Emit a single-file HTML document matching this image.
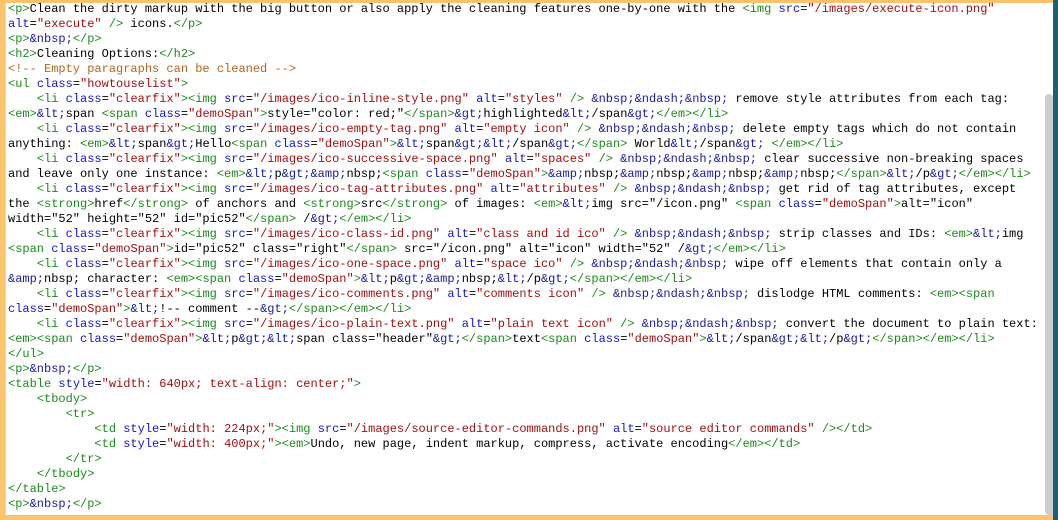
<!DOCTYPE html>
<html><head><meta charset="utf-8"><style>
html,body{margin:0;padding:0;width:1058px;height:520px;overflow:hidden;background:#fbc36c;}
#ed{position:absolute;left:5px;top:3px;width:1048px;height:512px;background:#fff;border-left:1px solid #e8d8b8;box-sizing:border-box;}
#teal{position:absolute;left:1053px;top:0;width:5px;height:520px;background:#1f5f73;}
#thumb{position:absolute;left:1045px;top:94px;width:8px;height:421px;background:#cdcdcd;border-radius:4px 4px 0 4px;}
pre{position:absolute;left:8px;top:2px;margin:0;font-family:"Liberation Mono","DejaVu Sans Mono",monospace;font-size:12px;line-height:15px;color:#000;white-space:pre;}
.g{color:#1c8a1c}.b{color:#1515c8}.r{color:#a01010}.n{color:#1a1aa0}.c{color:#b5651d}
</style></head><body>
<div id="ed"></div><div id="teal"></div><div id="thumb"></div>
<pre><span class="g">&lt;p&gt;</span>Clean the dirty markup with the big button or also apply the cleaning features one-by-one with the <span class="g">&lt;img </span><span class="b">src</span>=<span class="r">"/images/execute-icon.png"</span>
<span class="b">alt</span>=<span class="r">"execute"</span> <span class="g">/&gt;</span> icons.<span class="g">&lt;/p&gt;</span>
<span class="g">&lt;p&gt;</span><span class="n">&amp;nbsp;</span><span class="g">&lt;/p&gt;</span>
<span class="g">&lt;h2&gt;</span>Cleaning Options:<span class="g">&lt;/h2&gt;</span>
<span class="c">&lt;!-- Empty paragraphs can be cleaned --&gt;</span>
<span class="g">&lt;ul </span><span class="b">class</span>=<span class="r">"howtouselist"</span><span class="g">&gt;</span>
    <span class="g">&lt;li </span><span class="b">class</span>=<span class="r">"clearfix"</span><span class="g">&gt;&lt;img </span><span class="b">src</span>=<span class="r">"/images/ico-inline-style.png"</span> <span class="b">alt</span>=<span class="r">"styles"</span> <span class="g">/&gt;</span> <span class="n">&amp;nbsp;&amp;ndash;&amp;nbsp;</span> remove style attributes from each tag:
<span class="g">&lt;em&gt;</span><span class="n">&amp;lt;</span>span <span class="g">&lt;span </span><span class="b">class</span>=<span class="r">"demoSpan"</span><span class="g">&gt;</span>style="color: red;"<span class="g">&lt;/span&gt;</span><span class="n">&amp;gt;</span>highlighted<span class="n">&amp;lt;</span>/span<span class="n">&amp;gt;</span><span class="g">&lt;/em&gt;&lt;/li&gt;</span>
    <span class="g">&lt;li </span><span class="b">class</span>=<span class="r">"clearfix"</span><span class="g">&gt;&lt;img </span><span class="b">src</span>=<span class="r">"/images/ico-empty-tag.png"</span> <span class="b">alt</span>=<span class="r">"empty icon"</span> <span class="g">/&gt;</span> <span class="n">&amp;nbsp;&amp;ndash;&amp;nbsp;</span> delete empty tags which do not contain
anything: <span class="g">&lt;em&gt;</span><span class="n">&amp;lt;</span>span<span class="n">&amp;gt;</span>Hello<span class="g">&lt;span </span><span class="b">class</span>=<span class="r">"demoSpan"</span><span class="g">&gt;</span><span class="n">&amp;lt;</span>span<span class="n">&amp;gt;&amp;lt;</span>/span<span class="n">&amp;gt;</span><span class="g">&lt;/span&gt;</span> World<span class="n">&amp;lt;</span>/span<span class="n">&amp;gt;</span> <span class="g">&lt;/em&gt;&lt;/li&gt;</span>
    <span class="g">&lt;li </span><span class="b">class</span>=<span class="r">"clearfix"</span><span class="g">&gt;&lt;img </span><span class="b">src</span>=<span class="r">"/images/ico-successive-space.png"</span> <span class="b">alt</span>=<span class="r">"spaces"</span> <span class="g">/&gt;</span> <span class="n">&amp;nbsp;&amp;ndash;&amp;nbsp;</span> clear successive non-breaking spaces
and leave only one instance: <span class="g">&lt;em&gt;</span><span class="n">&amp;lt;</span>p<span class="n">&amp;gt;&amp;amp;</span>nbsp;<span class="g">&lt;span </span><span class="b">class</span>=<span class="r">"demoSpan"</span><span class="g">&gt;</span><span class="n">&amp;amp;</span>nbsp;<span class="n">&amp;amp;</span>nbsp;<span class="n">&amp;amp;</span>nbsp;<span class="n">&amp;amp;</span>nbsp;<span class="g">&lt;/span&gt;</span><span class="n">&amp;lt;</span>/p<span class="n">&amp;gt;</span><span class="g">&lt;/em&gt;&lt;/li&gt;</span>
    <span class="g">&lt;li </span><span class="b">class</span>=<span class="r">"clearfix"</span><span class="g">&gt;&lt;img </span><span class="b">src</span>=<span class="r">"/images/ico-tag-attributes.png"</span> <span class="b">alt</span>=<span class="r">"attributes"</span> <span class="g">/&gt;</span> <span class="n">&amp;nbsp;&amp;ndash;&amp;nbsp;</span> get rid of tag attributes, except
the <span class="g">&lt;strong&gt;</span>href<span class="g">&lt;/strong&gt;</span> of anchors and <span class="g">&lt;strong&gt;</span>src<span class="g">&lt;/strong&gt;</span> of images: <span class="g">&lt;em&gt;</span><span class="n">&amp;lt;</span>img src="/icon.png" <span class="g">&lt;span </span><span class="b">class</span>=<span class="r">"demoSpan"</span><span class="g">&gt;</span>alt="icon"
width="52" height="52" id="pic52"<span class="g">&lt;/span&gt;</span> /<span class="n">&amp;gt;</span><span class="g">&lt;/em&gt;&lt;/li&gt;</span>
    <span class="g">&lt;li </span><span class="b">class</span>=<span class="r">"clearfix"</span><span class="g">&gt;&lt;img </span><span class="b">src</span>=<span class="r">"/images/ico-class-id.png"</span> <span class="b">alt</span>=<span class="r">"class and id ico"</span> <span class="g">/&gt;</span> <span class="n">&amp;nbsp;&amp;ndash;&amp;nbsp;</span> strip classes and IDs: <span class="g">&lt;em&gt;</span><span class="n">&amp;lt;</span>img
<span class="g">&lt;span </span><span class="b">class</span>=<span class="r">"demoSpan"</span><span class="g">&gt;</span>id="pic52" class="right"<span class="g">&lt;/span&gt;</span> src="/icon.png" alt="icon" width="52" /<span class="n">&amp;gt;</span><span class="g">&lt;/em&gt;&lt;/li&gt;</span>
    <span class="g">&lt;li </span><span class="b">class</span>=<span class="r">"clearfix"</span><span class="g">&gt;&lt;img </span><span class="b">src</span>=<span class="r">"/images/ico-one-space.png"</span> <span class="b">alt</span>=<span class="r">"space ico"</span> <span class="g">/&gt;</span> <span class="n">&amp;nbsp;&amp;ndash;&amp;nbsp;</span> wipe off elements that contain only a
<span class="n">&amp;amp;</span>nbsp; character: <span class="g">&lt;em&gt;&lt;span </span><span class="b">class</span>=<span class="r">"demoSpan"</span><span class="g">&gt;</span><span class="n">&amp;lt;</span>p<span class="n">&amp;gt;&amp;amp;</span>nbsp;<span class="n">&amp;lt;</span>/p<span class="n">&amp;gt;</span><span class="g">&lt;/span&gt;&lt;/em&gt;&lt;/li&gt;</span>
    <span class="g">&lt;li </span><span class="b">class</span>=<span class="r">"clearfix"</span><span class="g">&gt;&lt;img </span><span class="b">src</span>=<span class="r">"/images/ico-comments.png"</span> <span class="b">alt</span>=<span class="r">"comments icon"</span> <span class="g">/&gt;</span> <span class="n">&amp;nbsp;&amp;ndash;&amp;nbsp;</span> dislodge HTML comments: <span class="g">&lt;em&gt;&lt;span</span>
<span class="b">class</span>=<span class="r">"demoSpan"</span><span class="g">&gt;</span><span class="n">&amp;lt;</span>!-- comment --<span class="n">&amp;gt;</span><span class="g">&lt;/span&gt;&lt;/em&gt;&lt;/li&gt;</span>
    <span class="g">&lt;li </span><span class="b">class</span>=<span class="r">"clearfix"</span><span class="g">&gt;&lt;img </span><span class="b">src</span>=<span class="r">"/images/ico-plain-text.png"</span> <span class="b">alt</span>=<span class="r">"plain text icon"</span> <span class="g">/&gt;</span> <span class="n">&amp;nbsp;&amp;ndash;&amp;nbsp;</span> convert the document to plain text:
<span class="g">&lt;em&gt;&lt;span </span><span class="b">class</span>=<span class="r">"demoSpan"</span><span class="g">&gt;</span><span class="n">&amp;lt;</span>p<span class="n">&amp;gt;&amp;lt;</span>span class="header"<span class="n">&amp;gt;</span><span class="g">&lt;/span&gt;</span>text<span class="g">&lt;span </span><span class="b">class</span>=<span class="r">"demoSpan"</span><span class="g">&gt;</span><span class="n">&amp;lt;</span>/span<span class="n">&amp;gt;&amp;lt;</span>/p<span class="n">&amp;gt;</span><span class="g">&lt;/span&gt;&lt;/em&gt;&lt;/li&gt;</span>
<span class="g">&lt;/ul&gt;</span>
<span class="g">&lt;p&gt;</span><span class="n">&amp;nbsp;</span><span class="g">&lt;/p&gt;</span>
<span class="g">&lt;table </span><span class="b">style</span>=<span class="r">"width: 640px; text-align: center;"</span><span class="g">&gt;</span>
    <span class="g">&lt;tbody&gt;</span>
        <span class="g">&lt;tr&gt;</span>
            <span class="g">&lt;td </span><span class="b">style</span>=<span class="r">"width: 224px;"</span><span class="g">&gt;&lt;img </span><span class="b">src</span>=<span class="r">"/images/source-editor-commands.png"</span> <span class="b">alt</span>=<span class="r">"source editor commands"</span> <span class="g">/&gt;&lt;/td&gt;</span>
            <span class="g">&lt;td </span><span class="b">style</span>=<span class="r">"width: 400px;"</span><span class="g">&gt;&lt;em&gt;</span>Undo, new page, indent markup, compress, activate encoding<span class="g">&lt;/em&gt;&lt;/td&gt;</span>
        <span class="g">&lt;/tr&gt;</span>
    <span class="g">&lt;/tbody&gt;</span>
<span class="g">&lt;/table&gt;</span>
<span class="g">&lt;p&gt;</span><span class="n">&amp;nbsp;</span><span class="g">&lt;/p&gt;</span></pre>
</body></html>
